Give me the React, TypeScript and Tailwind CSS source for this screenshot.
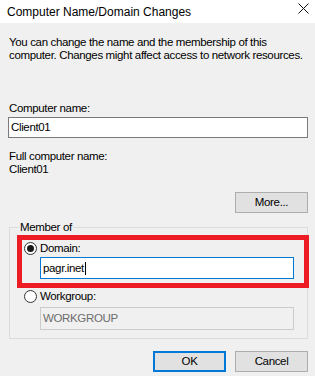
import React from "react";

const font = { fontFamily: '"Liberation Sans", Arial, sans-serif' };

function Radio({ checked }: { checked?: boolean }) {
  return (
    <span className="flex h-[13px] w-[13px] shrink-0 items-center justify-center rounded-full border border-[#333333] bg-white">
      {checked && <span className="h-[7px] w-[7px] rounded-full bg-[#1a1a1a]" />}
    </span>
  );
}

function Button({ label, primary }: { label: string; primary?: boolean }) {
  return (
    <button
      className={
        primary
          ? "flex h-[21px] w-[73px] items-center justify-center border-2 border-[#0078d7] bg-[#e1e1e1] text-black"
          : "flex h-[21px] w-[73px] items-center justify-center border border-[#adadad] bg-[#e1e1e1] text-black"
      }
    >
      {label}
    </button>
  );
}

export default function App() {
  return (
    <div className="flex h-[376px] w-[315px] flex-col overflow-hidden bg-[#f0f0f0] text-black" style={font}>
      {/* title bar */}
      <div className="flex h-[23px] shrink-0 items-center justify-between bg-white pl-[7px] pr-[6px]">
        <span className="text-[12px] leading-[14px]">Computer Name/Domain Changes</span>
        <svg width="11" height="11" viewBox="0 0 11 11" className="mb-[6px]">
          <path d="M0.5 0.5 L10.5 10.5 M10.5 0.5 L0.5 10.5" stroke="#111" strokeWidth="1" />
        </svg>
      </div>

      <div className="flex flex-col whitespace-nowrap pl-[8px] pr-[7px] pt-[13px] text-[11.5px] leading-[13px] tracking-[-0.35px]">
        <p className="pl-[1px]">
          You can change the name and the membership of this
          <br />
          computer. Changes might affect access to network resources.
        </p>

        <div className="mt-[40px] pl-[1px]">Computer name:</div>
        <div className="mt-[2px] flex h-[21px] items-center border border-[#7a7a7a] bg-white pl-[2px]">Client01</div>

        <div className="mt-[12px] pl-[1px]">Full computer name:</div>
        <div className="pl-[1px]">Client01</div>

        <div className="mt-[16px] flex justify-end">
          <Button label="More..." />
        </div>

        {/* group box */}
        <div className="relative ml-[1px] mt-[14px] flex h-[112px] flex-col border border-[#dcdcdc]">
          <span className="-mt-[7px] ml-[9px] w-fit bg-[#f0f0f0] px-[1px]">Member of</span>

          <div className="ml-[14px] mt-[8px] flex items-center gap-[3px]">
            <Radio checked />
            <span>Domain:</span>
          </div>
          <div className="ml-[30px] mt-[2px] flex h-[22px] w-[254px] items-center border border-[#0078d7] bg-white pl-[2px]">
            <span>pagr.inet</span>
            <span className="ml-[1px] h-[13px] w-px bg-black" />
          </div>

          <div className="ml-[14px] mt-[11px] flex items-center gap-[3px]">
            <Radio />
            <span>Workgroup:</span>
          </div>
          <div className="ml-[30px] mt-[4px] flex h-[23px] w-[254px] items-center border border-[#cccccc] bg-[#f0f0f0] pl-[2px] text-[#6d6d6d]">
            WORKGROUP
          </div>

          {/* annotation */}
          <div className="absolute left-[7px] top-[7px] h-[53px] w-[292px] border-[5px] border-[#ed1c24]" />
        </div>

        <div className="mt-[12px] flex justify-end gap-[9px]">
          <Button label="OK" primary />
          <Button label="Cancel" />
        </div>
      </div>
    </div>
  );
}
